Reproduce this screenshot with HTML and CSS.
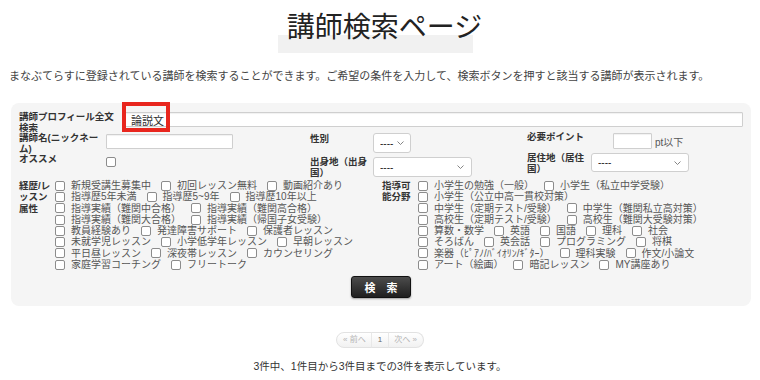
FILE: index.html
```html
<!DOCTYPE html>
<html lang="ja">

<head>
  <meta charset="UTF-8">
  <meta name="viewport" content="width=device-width, initial-scale=1.0">
  <title>講師検索ページ</title>
  <link rel="stylesheet" href="styles.css">
</head>

<body>
  <h1 class="title"><span>講師検索ページ</span></h1>
  <p class="lead">まなぶてらすに登録されている講師を検索することができます。ご希望の条件を入力して、検索ボタンを押すと該当する講師が表示されます。</p>

  <form class="search">
    <div class="row-free">
      <label class="lbl lbl-free">講師プロフィール全文<br>検索</label>
      <div class="free-box">
        <input type="text" class="txt free" value="論説文">
        <span class="mark"></span>
      </div>
    </div>

    <div class="grid">
      <label class="lbl">講師名(ニックネー<br>ム)</label>
      <div><input type="text" class="txt name"></div>
      <label class="lbl lbl-sex">性別</label>
      <div>
        <span class="sel sel-s">
          <select><option>----</option></select>
          <svg class="chev" width="7" height="4" viewBox="0 0 7 4"><path d="M0.5 0.5 L3.5 3.5 L6.5 0.5" fill="none" stroke="#777" stroke-width="0.9"/></svg>
        </span>
      </div>
      <label class="lbl lbl-pt">必要ポイント</label>
      <div class="pt"><input type="text" class="txt point"><span>pt以下</span></div>

      <label class="lbl">オススメ</label>
      <div class="osusume"><input type="checkbox" class="cb"></div>
      <label class="lbl down">出身地（出身<br>国）</label>
      <div class="down">
        <span class="sel sel-l">
          <select><option>----</option></select>
          <svg class="chev" width="7" height="4" viewBox="0 0 7 4"><path d="M0.5 0.5 L3.5 3.5 L6.5 0.5" fill="none" stroke="#777" stroke-width="0.9"/></svg>
        </span>
      </div>
      <label class="lbl lbl-live">居住地（居住<br>国）</label>
      <div>
        <span class="sel sel-l sel-live">
          <select><option>----</option></select>
          <svg class="chev" width="7" height="4" viewBox="0 0 7 4"><path d="M0.5 0.5 L3.5 3.5 L6.5 0.5" fill="none" stroke="#777" stroke-width="0.9"/></svg>
        </span>
      </div>
    </div>

    <div class="attrs">
      <div class="attr attr-l">
        <div class="lbl">経歴/レ<br>ッスン<br>属性</div>
        <div class="checks">
          <div class="line"><label><input type="checkbox" class="cb">新規受講生募集中</label><label><input type="checkbox" class="cb">初回レッスン無料</label><label><input type="checkbox" class="cb">動画紹介あり</label></div>
          <div class="line"><label><input type="checkbox" class="cb">指導歴5年未満</label><label><input type="checkbox" class="cb">指導歴5~9年</label><label><input type="checkbox" class="cb">指導歴10年以上</label></div>
          <div class="line"><label><input type="checkbox" class="cb">指導実績（難関中合格）</label><label><input type="checkbox" class="cb">指導実績（難関高合格）</label></div>
          <div class="line"><label><input type="checkbox" class="cb">指導実績（難関大合格）</label><label><input type="checkbox" class="cb">指導実績（帰国子女受験）</label></div>
          <div class="line"><label><input type="checkbox" class="cb">教員経験あり</label><label><input type="checkbox" class="cb">発達障害サポート</label><label><input type="checkbox" class="cb">保護者レッスン</label></div>
          <div class="line"><label><input type="checkbox" class="cb">未就学児レッスン</label><label><input type="checkbox" class="cb">小学低学年レッスン</label><label><input type="checkbox" class="cb">早朝レッスン</label></div>
          <div class="line"><label><input type="checkbox" class="cb">平日昼レッスン</label><label><input type="checkbox" class="cb">深夜帯レッスン</label><label><input type="checkbox" class="cb">カウンセリング</label></div>
          <div class="line"><label><input type="checkbox" class="cb">家庭学習コーチング</label><label><input type="checkbox" class="cb">フリートーク</label></div>
        </div>
      </div>
      <div class="attr attr-r">
        <div class="lbl">指導可<br>能分野</div>
        <div class="checks">
          <div class="line"><label><input type="checkbox" class="cb">小学生の勉強（一般）</label><label><input type="checkbox" class="cb">小学生（私立中学受験）</label></div>
          <div class="line"><label><input type="checkbox" class="cb">小学生（公立中高一貫校対策）</label></div>
          <div class="line"><label><input type="checkbox" class="cb">中学生（定期テスト/受験）</label><label><input type="checkbox" class="cb">中学生（難関私立高対策）</label></div>
          <div class="line"><label><input type="checkbox" class="cb">高校生（定期テスト/受験）</label><label><input type="checkbox" class="cb">高校生（難関大受験対策）</label></div>
          <div class="line"><label><input type="checkbox" class="cb">算数・数学</label><label><input type="checkbox" class="cb">英語</label><label><input type="checkbox" class="cb">国語</label><label><input type="checkbox" class="cb">理科</label><label><input type="checkbox" class="cb">社会</label></div>
          <div class="line"><label><input type="checkbox" class="cb">そろばん</label><label><input type="checkbox" class="cb">英会話</label><label><input type="checkbox" class="cb">プログラミング</label><label><input type="checkbox" class="cb">将棋</label></div>
          <div class="line"><label><input type="checkbox" class="cb">楽器（ﾋﾟｱﾉ/ﾊﾞｲｵﾘﾝ/ｷﾞﾀｰ）</label><label><input type="checkbox" class="cb">理科実験</label><label><input type="checkbox" class="cb">作文/小論文</label></div>
          <div class="line"><label><input type="checkbox" class="cb">アート（絵画）</label><label><input type="checkbox" class="cb">暗記レッスン</label><label><input type="checkbox" class="cb">MY講座あり</label></div>
        </div>
      </div>
    </div>

    <div class="actions">
      <button type="button" class="btn">検　索</button>
    </div>
  </form>

  <div class="pager">
    <span class="off">« 前へ</span><span class="cur">1</span><span class="off">次へ »</span>
  </div>

  <p class="count">3件中、1件目から3件目までの3件を表示しています。</p>
</body>

</html>
```

FILE: styles.css
```css
body {
  margin: 0;
  font-family: "Liberation Sans", "Noto Sans CJK JP", sans-serif;
  color: #333;
  background: #fff;
}

.title {
  margin: 0;
  padding-top: 8px;
  text-align: center;
  font-size: 28px;
  font-weight: 400;
  line-height: 40px;
  color: #222;
}

.title span {
  display: inline-block;
  vertical-align: top;
  padding: 0 0 5px 9px;
  background: linear-gradient(#f1f1f1, #f1f1f1) no-repeat left bottom / 195px 18px;
}

.lead {
  margin: 15px 0 0;
  padding-left: 9px;
  font-size: 11px;
  line-height: 16px;
  color: #444;
}

.search {
  margin: 19px 9px 0 11px;
  padding: 9px 8px 8px;
  background: #f5f5f5;
  border-radius: 8px;
}

.lbl {
  font-size: 9.5px;
  font-weight: 700;
  line-height: 10.5px;
  color: #333;
  white-space: nowrap;
}

.txt {
  box-sizing: border-box;
  margin: 0;
  padding: 0 5px;
  border: 1px solid #cfcfcf;
  border-radius: 1px;
  background: #fff;
  box-shadow: inset 0 1px 1px rgba(0, 0, 0, 0.06);
  font-family: inherit;
  font-size: 11px;
  color: #333;
  outline: none;
}

/* 1行目 */
.row-free {
  display: flex;
  height: 20px;
  margin-bottom: 1px;
}

.lbl-free {
  width: 106px;
  flex: none;
}

.free-box {
  position: relative;
  flex: 1;
}

.free {
  display: block;
  width: 100%;
  height: 15px;
}

.mark {
  position: absolute;
  left: -3px;
  top: -10px;
  width: 48px;
  height: 30px;
  box-sizing: border-box;
  border: 4px solid #e8261e;
}

/* 2-3行目 */
.grid {
  display: grid;
  grid-template-columns: 87px 204px 63px 154px 64px 1fr;
  grid-template-rows: 21px 23px;
}

.name {
  width: 127px;
  height: 15px;
  margin-top: 1px;
  display: block;
}

.lbl-sex {
  margin-top: 1px;
}

.lbl-pt {
  margin-top: -1px;
}

.pt {
  display: flex;
  align-items: center;
  height: 16px;
  padding-left: 22px;
  font-size: 10px;
  color: #555;
}

.point {
  width: 39px;
  height: 16px;
  margin-right: 3px;
}

.osusume {
  padding-top: 3px;
}

.down {
  margin-top: 3px;
}

.lbl-live {
  margin-top: -1px;
}

.sel {
  position: relative;
  display: inline-block;
  vertical-align: top;
}

.sel select {
  -webkit-appearance: none;
  appearance: none;
  box-sizing: border-box;
  display: block;
  margin: 0;
  padding: 0 0 0 6px;
  border: 1px solid #cfcfcf;
  border-radius: 3px;
  background: #fff;
  font-family: inherit;
  font-size: 10px;
  color: #222;
  outline: none;
}

.sel-s select {
  width: 38px;
  height: 20px;
}

.sel-l select {
  width: 99px;
  height: 20px;
}

.sel-live select {
  width: 98px;
  height: 19px;
  margin-top: -1px;
}

.chev {
  position: absolute;
  right: 8px;
  top: 8px;
  pointer-events: none;
}

.sel-live .chev {
  top: 7px;
}

.sel-s .chev {
  right: 7px;
}

/* チェックボックス */
.cb {
  -webkit-appearance: none;
  appearance: none;
  box-sizing: border-box;
  width: 10px;
  height: 10px;
  margin: 0 6px 0 0;
  border: 1px solid #8c8c8c;
  border-radius: 2px;
  background: #fff;
  flex: none;
}

.osusume .cb {
  display: block;
}

.attrs {
  display: flex;
  margin-top: 3px;
}

.attr {
  display: flex;
}

.attr .lbl {
  line-height: 11.3px;
}

.attr-l {
  width: 363px;
}

.attr-l .lbl {
  width: 36px;
}

.attr-r .lbl {
  width: 36px;
}

.line {
  display: flex;
  align-items: center;
  height: 11.3px;
  white-space: nowrap;
}

.line label {
  display: flex;
  align-items: center;
  margin-right: 10px;
  font-size: 10px;
  line-height: 11.3px;
  color: #555;
}

.actions {
  display: flex;
  justify-content: center;
  margin-top: 6px;
}

.btn {
  width: 60px;
  height: 22px;
  padding: 0;
  border: 1px solid #111;
  border-radius: 3px;
  background: linear-gradient(#4c4c4c, #1f1f1f);
  box-shadow: 0 1px 2px rgba(0, 0, 0, 0.35);
  font-family: inherit;
  font-size: 11px;
  font-weight: 700;
  color: #fff;
  cursor: pointer;
}

/* ページャー */
.pager {
  display: flex;
  justify-content: center;
  margin-top: 26px;
}

.pager span {
  height: 14px;
  line-height: 14px;
  padding: 0 5px;
  border: 1px solid #e2e2e2;
  background: linear-gradient(#fff, #f1f1f1);
  font-size: 8px;
  color: #b3b3b3;
}

.pager span:first-child {
  border-radius: 8px 0 0 8px;
  padding-left: 6px;
}

.pager span:last-child {
  border-radius: 0 8px 8px 0;
  padding-right: 6px;
}

.pager span + span {
  border-left-color: #e8e8e8;
  margin-left: -1px;
}

.pager .cur {
  color: #666;
  padding: 0 6px;
}

.count {
  margin: 10px 0 0;
  text-align: center;
  font-size: 10.5px;
  line-height: 16px;
  color: #333;
}
```
